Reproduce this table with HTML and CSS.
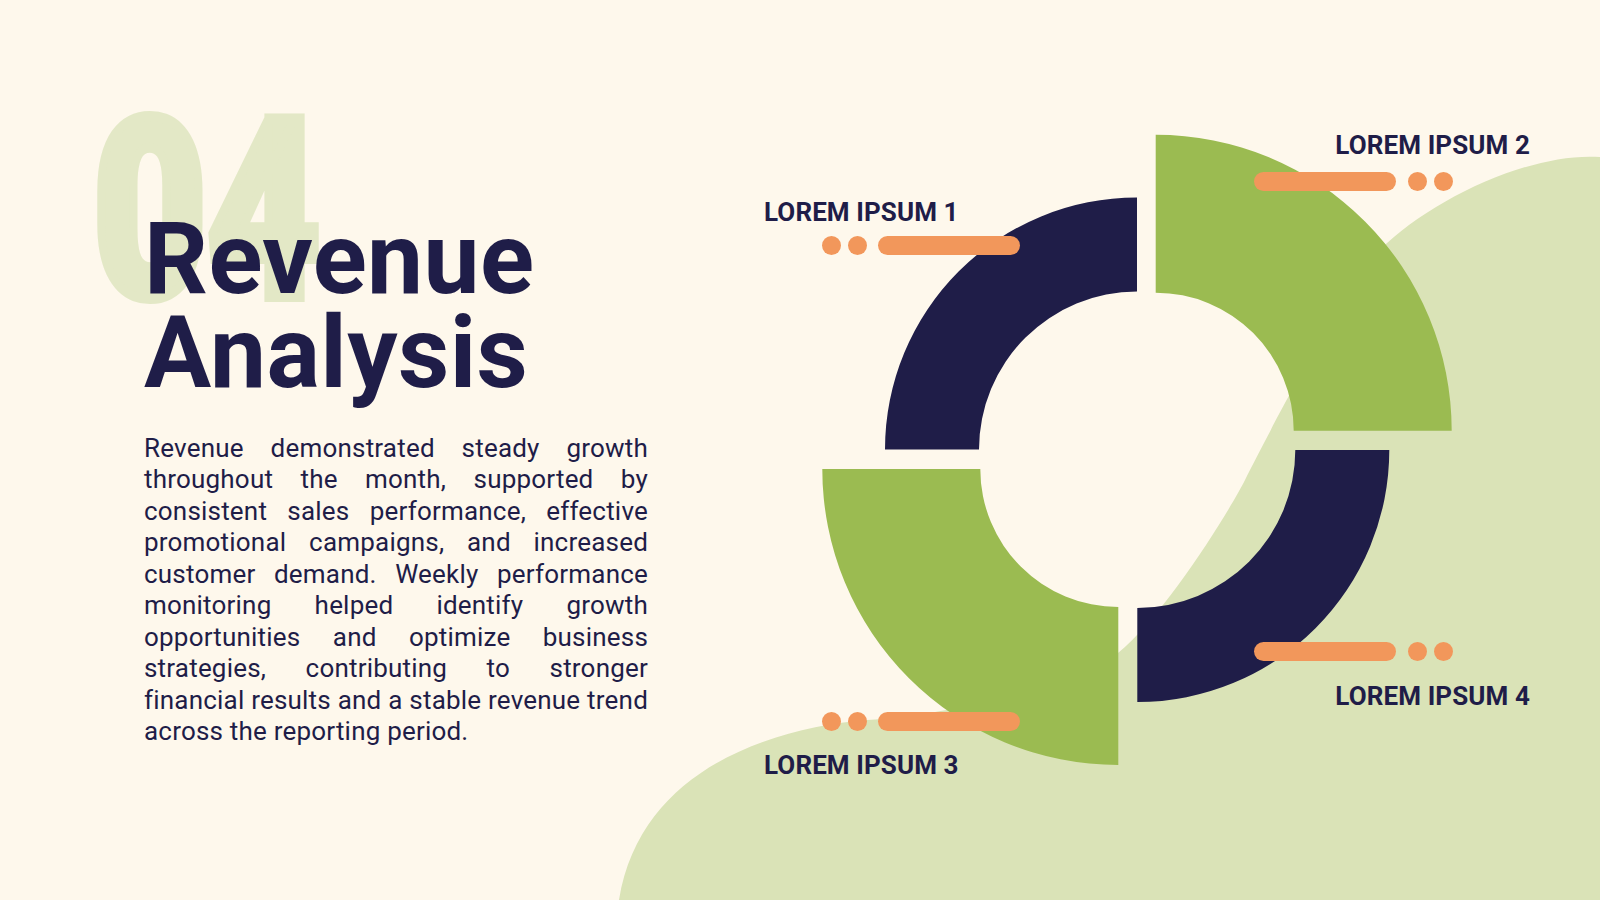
FILE: index.html
```html
<!DOCTYPE html>
<html lang="en">
<head>
<meta charset="utf-8">
<title>Revenue Analysis</title>
<link rel="stylesheet" href="styles.css">
</head>
<body>
<div class="slide">
  <svg class="canvas" viewBox="0 0 1600 900" width="1600" height="900" aria-hidden="true">
    <path class="blob" d="M 1600 157 C 1530 152, 1430 200, 1380 250 C 1350 280, 1275 420, 1245 480 C 1230 510, 1165 615, 1118 653 C 1075 688, 950 714, 867 720 C 770 728, 640 770, 619 900 L 1600 900 Z"/>
    <path class="navy" d="M 885 449.5 A 252 252 0 0 1 1137 197.5 L 1137 291.5 A 158 158 0 0 0 979 449.5 Z"/>
    <path class="green" d="M 1155.7 134.7 A 296 296 0 0 1 1451.7 430.7 L 1293.7 430.7 A 138 138 0 0 0 1155.7 292.7 Z"/>
    <path class="navy" d="M 1137.3 702 A 252 252 0 0 0 1389.3 450 L 1295.3 450 A 158 158 0 0 1 1137.3 608 Z"/>
    <path class="green" d="M 822.3 469 A 296 296 0 0 0 1118.3 765 L 1118.3 607 A 138 138 0 0 1 980.3 469 Z"/>
  </svg>

  <section class="intro">
    <div class="num">04</div>
    <h1 class="title">Revenue<br>Analysis</h1>
    <p class="desc">Revenue demonstrated steady growth throughout the month, supported by consistent sales performance, effective promotional campaigns, and increased customer demand. Weekly performance monitoring helped identify growth opportunities and optimize business strategies, contributing to stronger financial results and a stable revenue trend across the reporting period.</p>
  </section>

  <div class="label label-1">LOREM IPSUM 1</div>
  <div class="ind ind-1"><span class="dot"></span><span class="dot"></span><span class="bar"></span></div>

  <div class="label label-2">LOREM IPSUM 2</div>
  <div class="ind ind-2"><span class="bar"></span><span class="dot"></span><span class="dot"></span></div>

  <div class="label label-3">LOREM IPSUM 3</div>
  <div class="ind ind-3"><span class="dot"></span><span class="dot"></span><span class="bar"></span></div>

  <div class="label label-4">LOREM IPSUM 4</div>
  <div class="ind ind-4"><span class="bar"></span><span class="dot"></span><span class="dot"></span></div>
</div>
</body>
</html>
```

FILE: styles.css
```css
* { box-sizing: border-box; }

html, body {
  margin: 0;
  padding: 0;
  background: #fef8ec;
}

.slide {
  position: relative;
  width: 1600px;
  height: 900px;
  overflow: hidden;
  background: #fef8ec;
  font-family: Roboto, "Liberation Sans", Arial, sans-serif;
  color: #1f1d48;
}

.canvas {
  position: absolute;
  left: 0;
  top: 0;
  display: block;
}

.blob { fill: #dae3b7; }
.navy { fill: #1f1d48; }
.green { fill: #9bbb51; }

.intro {
  position: relative;
  width: 648px;
  padding: 211.6px 0 0 144px;
}

.num {
  position: absolute;
  left: 93px;
  top: 87px;
  font-size: 250px;
  line-height: 250px;
  font-weight: 900;
  color: #e3e8c6;
  -webkit-text-stroke: 10px #e3e8c6;
  transform: scaleX(0.785);
  transform-origin: left top;
  white-space: nowrap;
}

.title {
  position: relative;
  margin: 0;
  font-size: 100px;
  line-height: 94px;
  font-weight: 700;
  letter-spacing: 0.4px;
}

.desc {
  position: relative;
  margin: 33px 0 0;
  width: 504px;
  font-size: 26px;
  line-height: 31.5px;
  font-weight: 400;
  letter-spacing: 0.2px;
  text-align: justify;
}

.label {
  position: absolute;
  font-size: 26px;
  line-height: 26px;
  font-weight: 700;
  letter-spacing: 0.1px;
  white-space: nowrap;
}

.label-1 { left: 764px; top: 199px; }
.label-2 { right: 70px; top: 131.6px; }
.label-3 { left: 764px; top: 751.6px; }
.label-4 { right: 70px; top: 683.3px; }

.ind {
  position: absolute;
  display: flex;
  align-items: center;
  height: 19px;
}

.ind-1 { left: 822px; top: 235.7px; }
.ind-2 { left: 1254px; top: 172.3px; }
.ind-3 { left: 822px; top: 711.7px; }
.ind-4 { left: 1254px; top: 641.7px; }

.dot {
  width: 19px;
  height: 19px;
  border-radius: 50%;
  background: #f2975b;
}

.bar {
  width: 142px;
  height: 19px;
  border-radius: 9.5px;
  background: #f2975b;
}

.ind .dot + .dot { margin-left: 7px; }
.ind .dot + .bar { margin-left: 11px; }
.ind .bar + .dot { margin-left: 12px; }
```
